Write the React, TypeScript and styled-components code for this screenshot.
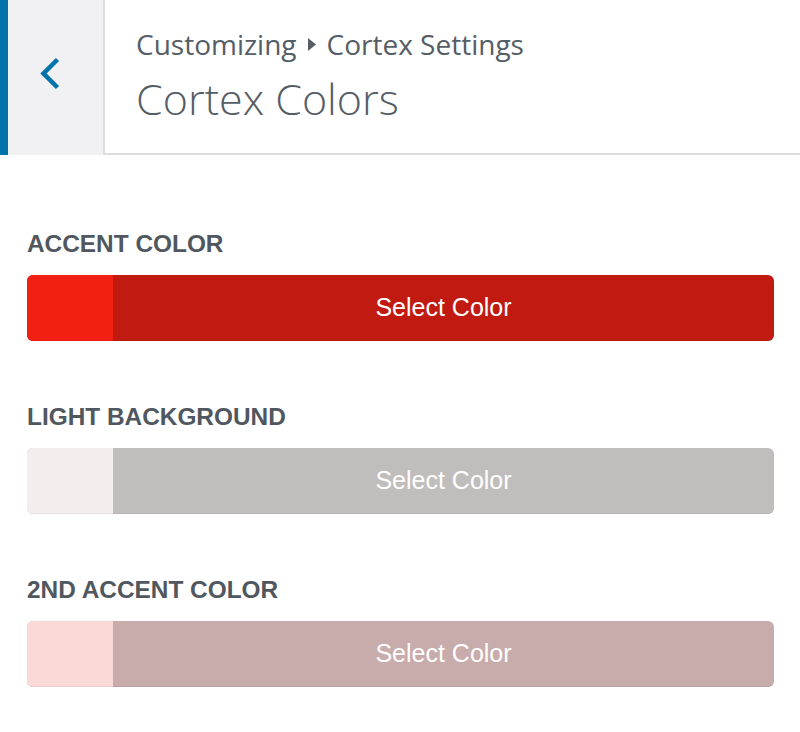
import React from "react";
import styled, { createGlobalStyle } from "styled-components";

const GlobalStyle = createGlobalStyle`
  html, body { margin: 0; padding: 0; background: #ffffff; }
  body { font-family: "Liberation Sans", Arial, sans-serif; }
  * { box-sizing: border-box; }
`;

const Page = styled.div`
  width: 800px;
  min-height: 732px;
  background: #ffffff;
`;

const Header = styled.header`
  display: flex;
  height: 155px;
`;

const ActiveStrip = styled.div`
  width: 8px;
  background: #0073aa;
`;

const BackButton = styled.button`
  width: 97px;
  height: 100%;
  margin: 0;
  padding: 57px 0 0 32px;
  display: flex;
  align-items: flex-start;
  background: #f1f1f3;
  border: none;
  border-right: 2px solid #dddddd;
  cursor: pointer;
`;

const TitleArea = styled.div`
  flex: 1;
  display: flex;
  flex-direction: column;
  padding: 24px 0 0 31px;
  border-bottom: 2px solid #dddddd;
  font-family: "Open Sans", "Noto Sans", sans-serif;
  color: #555d66;
`;

const Breadcrumb = styled.div`
  display: flex;
  align-items: center;
  gap: 11px;
  font-size: 28px;
  line-height: 40px;
  height: 40px;
`;

const Title = styled.h1`
  margin: 7px 0 0;
  font-size: 43px;
  font-weight: 300;
  line-height: 56px;
`;

const Content = styled.main`
  display: flex;
  flex-direction: column;
  gap: 62px;
  padding: 75px 26px 0 27px;
`;

const Section = styled.section`
  display: flex;
  flex-direction: column;
`;

const Label = styled.div`
  margin: 0 0 17px;
  font-family: "Liberation Sans", Arial, sans-serif;
  font-weight: 700;
  font-size: 24.4px;
  line-height: 28px;
  color: #50575e;
`;

const ColorButton = styled.button<{ $fill: string }>`
  display: flex;
  width: 100%;
  height: 66px;
  margin: 0;
  padding: 0;
  border: none;
  border-radius: 6px;
  overflow: hidden;
  background: ${(p) => p.$fill};
  box-shadow: inset 0 -1px 0 rgba(0, 0, 0, 0.06);
  cursor: pointer;
`;

const Swatch = styled.span<{ $color: string }>`
  width: 86px;
  height: 100%;
  background: ${(p) => p.$color};
  box-shadow: inset 0 -1px 0 rgba(0, 0, 0, 0.05);
`;

const ButtonText = styled.span`
  flex: 1;
  display: flex;
  align-items: center;
  justify-content: center;
  font-family: "Liberation Sans", Arial, sans-serif;
  font-size: 25px;
  color: #ffffff;
  padding-bottom: 1px;
`;

const colors = [
  { label: "ACCENT COLOR", swatch: "#f21f13", fill: "#c11a10" },
  { label: "LIGHT BACKGROUND", swatch: "#f3eded", fill: "#c1bdbc" },
  { label: "2ND ACCENT COLOR", swatch: "#fbd9d6", fill: "#c8acab" },
];

export default function App() {
  return (
    <Page>
      <GlobalStyle />
      <Header>
        <ActiveStrip />
        <BackButton aria-label="Back">
          <svg width="20" height="33" viewBox="0 0 20 33">
            <polyline
              points="17.5,2.5 3.5,16.5 17.5,30.5"
              fill="none"
              stroke="#0073aa"
              strokeWidth="4.5"
            />
          </svg>
        </BackButton>
        <TitleArea>
          <Breadcrumb>
            <span>Customizing</span>
            <svg width="8" height="13" viewBox="0 0 8 13">
              <polygon points="0,0 8,6.5 0,13" fill="#555d66" />
            </svg>
            <span>Cortex Settings</span>
          </Breadcrumb>
          <Title>Cortex Colors</Title>
        </TitleArea>
      </Header>
      <Content>
        {colors.map((c) => (
          <Section key={c.label}>
            <Label>{c.label}</Label>
            <ColorButton $fill={c.fill}>
              <Swatch $color={c.swatch} />
              <ButtonText>Select Color</ButtonText>
            </ColorButton>
          </Section>
        ))}
      </Content>
    </Page>
  );
}
